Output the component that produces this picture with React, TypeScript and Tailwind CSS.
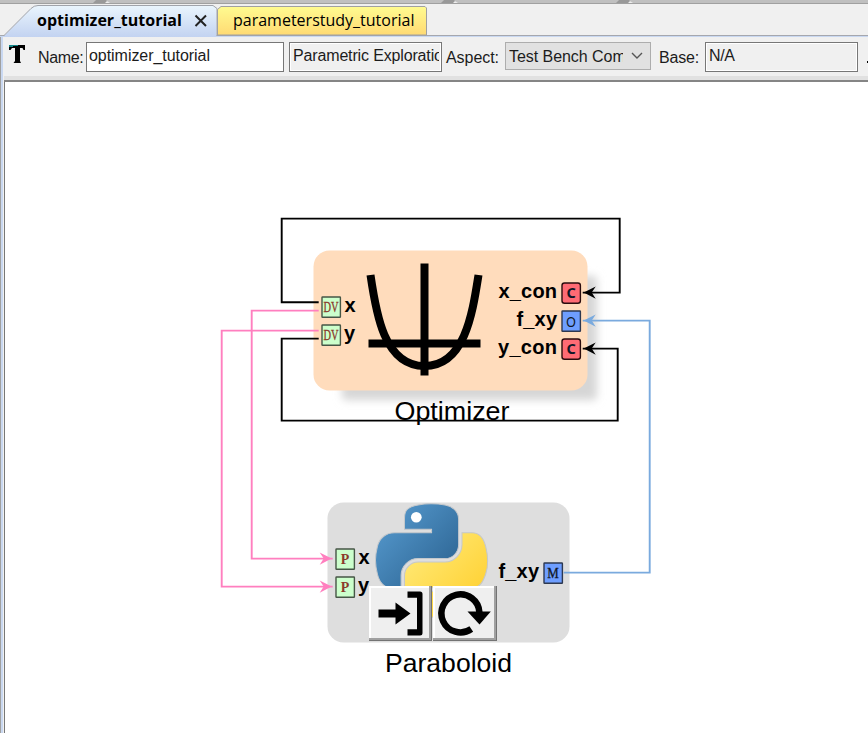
import React from "react";

const SANS = "font-['Liberation_Sans',Arial,sans-serif]";

function TopBar() {
  return (
    <div className="relative h-[4px] w-full shrink-0 border-b border-[#a0a0a0] bg-[#c0c0c0]">
      <svg className="absolute left-0 top-0" width="868" height="3">
        {[93, 441, 616].map((x) => (
          <g key={x}>
            <path d={`M${x} 3L${x + 3} 0h10l3 3z`} fill="#999" />
            <path d={`M${x + 12} 3l2-2 3 2z`} fill="#eee" />
          </g>
        ))}
      </svg>
    </div>
  );
}

function Tabs() {
  return (
    <div className="relative flex h-[33px] shrink-0 border-b-2 border-[#c9d8f1] bg-[#f0f0f0] font-['Open_Sans','Noto_Sans',sans-serif] text-[16px] leading-[33px] text-black">
      <svg className="absolute left-0 top-0" width="868" height="33">
        <defs>
          <linearGradient id="active" x1="0" y1="0" x2="0" y2="1">
            <stop offset="0" stopColor="#eaf5fd" />
            <stop offset="1" stopColor="#c3d3f1" />
          </linearGradient>
          <linearGradient id="idle" x1="0" y1="0" x2="0" y2="1">
            <stop offset="0" stopColor="#fffb90" />
            <stop offset="1" stopColor="#ffda73" />
          </linearGradient>
        </defs>
        <path d="M0 31.5H868" stroke="#a5a7ae" />
        <path d="M217.500 31V5.500L221 2.500H425L426.500 4V31z" fill="url(#idle)" stroke="#a0a0a0" />
        <path d="M3 33L5 31L31 4.500Q34 1.500 38 1.500H213L216.500 4V33z" fill="url(#active)" />
        <path d="M4 31.500L31 4.500Q34 1.500 38 1.500H213L217 4.500V31.500" fill="none" stroke="#a0a3aa" />
      </svg>
      <div className="relative flex w-[217px] pl-[37px]">
        <span className="w-[146px] whitespace-nowrap font-bold tracking-[0.02px]">optimizer_tutorial</span>
        <svg className="ml-[11px] mt-[10px]" width="14" height="14" viewBox="0 0 14 14">
          <path d="M1.500 1.500L12 12M12 1.500L1.500 12" stroke="#222" strokeWidth="2" />
        </svg>
      </div>
      <div className="relative w-[210px] whitespace-nowrap pl-[16px]">parameterstudy_tutorial</div>
    </div>
  );
}

function Toolbar() {
  return (
    <div className={`relative flex h-[45px] shrink-0 items-start overflow-hidden bg-[#f0f0f0] text-[16px] tracking-[-0.05px] text-[#1c1c1c] ${SANS}`}>
      <div className="absolute bottom-0 left-[4px] h-[6px] w-full border-b-2 border-[#858585] bg-[#e1e1e1]" />
      <div className="absolute left-0 top-0 h-full w-[3px] border-l border-[#a0a0a0] bg-[#c9d8f1]" />
      <svg className="ml-[9px] mt-[8px] shrink-0" width="16" height="19">
        <path d="M0 0H16V5H14.500L13.500 3H11V16L12 18H4.500L6 16V3H3L1.500 5H0z" fill="#000" />
        <path d="M0 .5H9M0 1.500H4" stroke="#16868a" />
      </svg>
      <span className="ml-[13px] mt-[9px] w-[48px] shrink-0 whitespace-nowrap leading-[24px] tracking-[-0.35px]">Name:</span>
      <div className="mt-[5px] h-[30px] w-[198px] shrink-0 whitespace-nowrap border border-[#777] bg-white pl-[2px] leading-[26px]">optimizer_tutorial</div>
      <div className="ml-[5px] mt-[5px] h-[30px] w-[153px] shrink-0 overflow-hidden border border-[#777] bg-[#f0f0f0] pl-[3px] pr-[2px] shadow-[inset_0_0_0_1px_white]">
        <div className="overflow-hidden whitespace-nowrap leading-[26px] tracking-[-0.15px]">Parametric Exploratio</div>
      </div>
      <span className="ml-[4px] mt-[9px] w-[59px] shrink-0 whitespace-nowrap leading-[24px]">Aspect:</span>
      <div className="mt-[5px] flex h-[28px] w-[146px] shrink-0 border border-[#adadad] bg-[#e1e1e1] pl-[3px]">
        <div className="w-[114px] overflow-hidden whitespace-nowrap leading-[27px]">Test Bench Com</div>
        <svg className="ml-[8px] mt-[9px]" width="12" height="8">
          <path d="M1 1L6 6L11 1" fill="none" stroke="#555" strokeWidth="1.400" />
        </svg>
      </div>
      <span className="ml-[8px] mt-[9px] w-[46px] shrink-0 whitespace-nowrap leading-[24px] tracking-[-0.15px]">Base:</span>
      <div className="mt-[5px] h-[30px] w-[153px] shrink-0 border border-[#777] bg-[#f0f0f0] pl-[3px] leading-[26px] tracking-[-0.4px] shadow-[inset_0_0_0_1px_white]">N/A</div>
      <span className="ml-[9px] mt-[24px] h-[2px] w-[2px] shrink-0 bg-black" />
    </div>
  );
}

type PortProps = { x: number; y: number; kind: string; label: string; labelX: number; labelW: number };

function Port({ x, y, kind, label, labelX, labelW }: PortProps) {
  const con = kind === "C";
  const blue = kind === "O" || kind === "M";
  const fill = con ? "#ff6b74" : blue ? "#6e9eff" : "#ccffcc";
  const ink = con || blue ? "#111827" : "#8b3a2b";
  return (
    <g>
      <rect x={x + 1} y={y + 1} width="18.4" height="20.2" rx={con ? 2.5 : 0.5} fill={fill} stroke={con ? "#2a0c0e" : blue ? "#2d3850" : "#465646"} strokeWidth="1.4" />
      <text
        x={x + 10.1}
        y={y + (kind === "O" ? 16.7 : 16.3)}
        fill={ink}
        textAnchor="middle"
        className={
          con
            ? "font-['Noto_Sans',sans-serif] text-[14.500px] font-bold"
            : kind === "O"
              ? "font-['Noto_Sans',sans-serif] text-[15px]"
              : kind === "P"
                ? "font-['Liberation_Serif',serif] text-[14px] font-bold"
                : "font-['Liberation_Serif',serif] text-[14.500px]"
        }
        textLength={kind === "DV" ? 15 : kind === "M" ? 11.5 : kind === "O" ? 10 : undefined}
        lengthAdjust="spacingAndGlyphs"
        stroke={kind === "DV" || kind === "M" ? ink : undefined}
        strokeWidth="0.3"
      >
        {kind}
      </text>
      <text x={labelX} y={y + 16.4} textLength={labelW} className="font-['Liberation_Sans',Arial,sans-serif] text-[20px] font-bold">
        {label}
      </text>
    </g>
  );
}

function PythonLogo() {
  return (
    <g transform="translate(375.500 503.800) scale(1.01)" stroke="#c4c8cc" strokeWidth="1">
      <path fill="url(#pyBlue)" d="M54.919 0C50.335.022 45.958.413 42.106 1.095 30.760 3.099 28.700 7.295 28.700 15.032V25.251H55.513V28.657H18.638C10.845 28.657 4.022 33.341 1.888 42.251-.574 52.464-.683 58.837 1.888 69.501 3.793 77.439 8.345 83.095 16.138 83.095H25.356V70.845C25.356 61.995 33.013 54.188 42.106 54.188H68.888C76.343 54.188 82.294 48.050 82.294 40.563V15.032C82.294 7.766 76.164 2.307 68.888 1.095 64.282.328 59.502-.020 54.919 0z" />
      <path fill="url(#pyYellow)" d="M85.638 28.657V40.563C85.638 49.794 77.812 57.563 68.888 57.563H42.106C34.770 57.563 28.700 63.842 28.700 71.188V96.720C28.700 103.986 35.019 108.260 42.106 110.345 50.594 112.840 58.732 113.291 68.888 110.345 75.638 108.390 82.294 104.457 82.294 96.720V86.501H55.513V83.095H95.700C103.492 83.095 106.396 77.659 109.106 69.501 111.906 61.102 111.787 53.025 109.106 42.251 107.180 34.493 103.502 28.657 95.700 28.657z" />
      <circle cx="40.4" cy="13.300" r="5.300" fill="#fff" stroke="none" />
    </g>
  );
}

function ToolButton({ x, w, children }: { x: number; w: number; children: React.ReactNode }) {
  return (
    <g>
      <rect x={x} y="586" width={w} height="55" fill="#737373" />
      <rect x={x} y="586" width={w - 1} height="54" fill="#a0a0a0" />
      <rect x={x} y="586" width={w - 3} height="52" fill="#fff" />
      <rect x={x + 2} y="588" width={w - 5} height="50" fill="#efefef" />
      {children}
    </g>
  );
}

function Diagram() {
  return (
    <svg className="block" width="863" height="651" viewBox="5 82 863 651">
      <defs>
        <linearGradient id="pyBlue" x1="0" y1="0" x2="0.85" y2="0.8">
          <stop offset="0" stopColor="#5a9fd4" />
          <stop offset="1" stopColor="#306998" />
        </linearGradient>
        <linearGradient id="pyYellow" x1="0.2" y1="0.1" x2="0.8" y2="0.7">
          <stop offset="0" stopColor="#ffe873" />
          <stop offset="1" stopColor="#ffd43b" />
        </linearGradient>
        <filter id="soft" x="-10%" y="-15%" width="120%" height="130%">
          <feGaussianBlur stdDeviation="4.5" />
        </filter>
      </defs>

      <rect x="342" y="276" width="255" height="124" rx="4" fill="#d6d6d6" filter="url(#soft)" />
      <rect x="313.500" y="250.500" width="274" height="140" rx="16" fill="#ffdcbc" />
      <rect x="327.500" y="502.500" width="242" height="140" rx="16" fill="#dedede" />

      <g fill="none" stroke="#000" strokeWidth="8">
        <path d="M424.500 263.500V375.500M368.500 343.500H480.500" />
        <path d="M370.500 275C376 313 384 366 424.500 366S472.500 313 478.500 275" />
      </g>

      <PythonLogo />
      <text x="385" y="672" textLength="127" lengthAdjust="spacingAndGlyphs" className="font-['Liberation_Sans',Arial,sans-serif] text-[26px]">Paraboloid</text>
      <text x="394.500" y="420" textLength="115" lengthAdjust="spacingAndGlyphs" className="font-['Liberation_Sans',Arial,sans-serif] text-[26px]">Optimizer</text>

      <g transform="translate(-0.300 -0.400)">
        <g fill="none" strokeWidth="1.900">
          <g stroke="#000">
            <path d="M319 302.700H282V219H620V293H583" />
            <path d="M319 339H282V421H618V349H583" />
          </g>
          <g stroke="#ff7fbf">
            <path d="M319 311H252V559H333" />
            <path d="M319 331H222V587H333" />
          </g>
          <path d="M583 321H650V573H564" stroke="#7aaade" />
        </g>
        <path d="M584 293L596 286.800L592 293L596 299.200zM584 349L596 342.800L592 349L596 355.200z" fill="#000" />
        <path d="M584 321L596 314.800L592 321L596 327.200z" fill="#7aaade" />
        <path d="M332 559L320 552.800L324 559L320 565.200zM332 587L320 580.800L324 587L320 593.200z" fill="#ff7fbf" />
      </g>

      <Port x={321} y={296} kind="DV" label="x" labelX={344.500} labelW={11} />
      <Port x={321} y={324} kind="DV" label="y" labelX={344} labelW={11} />
      <Port x={561} y={282} kind="C" label="x_con" labelX={498.500} labelW={58.5} />
      <Port x={561} y={310} kind="O" label="f_xy" labelX={516.500} labelW={40.5} />
      <Port x={561} y={338} kind="C" label="y_con" labelX={498} labelW={59} />
      <Port x={335} y={548} kind="P" label="x" labelX={358.500} labelW={11} />
      <Port x={335} y={576} kind="P" label="y" labelX={358} labelW={11} />
      <Port x={543} y={562} kind="M" label="f_xy" labelX={498.500} labelW={40.5} />

      <ToolButton x={369} w={63}>
        <path d="M378.500 609.500H395.500V602.500L410.500 613.500L395.500 624.500V617.500H378.500z" fill="#000" />
        <path d="M407.500 591.500H420Q422.500 591.500 422.500 594V633Q422.500 635.500 420 635.500H407.500V629.200H417V597.800H407.500z" fill="#000" />
      </ToolButton>
      <ToolButton x={433} w={64}>
        <path d="M471.300 629A19 19 0 1 1 479.400 612.500" fill="none" stroke="#000" strokeWidth="6.500" />
        <path d="M467.500 611.500H490.800L479.500 624.500z" fill="#000" />
      </ToolButton>
    </svg>
  );
}

export default function App() {
  return (
    <div className="flex h-[733px] w-[868px] flex-col overflow-hidden bg-[#f0f0f0]">
      <TopBar />
      <Tabs />
      <Toolbar />
      <div className="flex h-[651px] border-l border-[#a0a0a0] bg-white">
        <div className="w-[2px] shrink-0 bg-[#c9d8f1]" />
        <div className="w-px shrink-0 bg-[#f0f0f0]" />
        <div className="w-px shrink-0 bg-[#777]" />
        <Diagram />
      </div>
    </div>
  );
}
